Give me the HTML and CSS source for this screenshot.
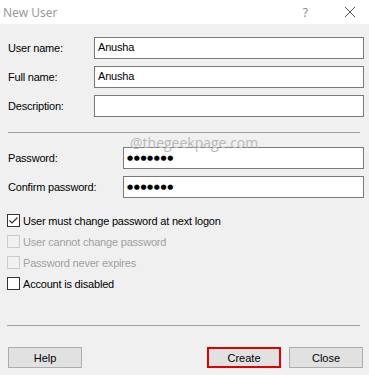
FILE: index.html
```html
<!DOCTYPE html>
<html lang="en">
<head>
    <meta charset="UTF-8">
    <title>New User</title>
    <link rel="stylesheet" href="styles.css">
</head>
<body>
    <div class="dialog">
        <div class="titlebar">
            <span class="title">New User</span>
            <span class="help-btn">?</span>
            <svg class="close-x" width="12" height="12" viewBox="0 0 12 12">
                <path d="M1 1 L11 11 M11 1 L1 11" stroke="#555" stroke-width="1" fill="none"/>
            </svg>
        </div>

        <div class="content">
            <div class="fields">
                <div class="row">
                    <label>User name:</label>
                    <div class="field">Anusha</div>
                </div>
                <div class="row">
                    <label>Full name:</label>
                    <div class="field">Anusha</div>
                </div>
                <div class="row">
                    <label>Description:</label>
                    <div class="field"></div>
                </div>
            </div>

            <div class="separator sep-top"></div>
            <div class="watermark">@thegeekpage.com</div>

            <div class="fields pw-fields">
                <div class="row">
                    <label class="wide">Password:</label>
                    <div class="field dots">●●●●●●●</div>
                </div>
                <div class="row">
                    <label class="wide">Confirm password:</label>
                    <div class="field dots">●●●●●●●</div>
                </div>
            </div>

            <div class="checks">
                <div class="check">
                    <span class="box">
                        <svg width="11" height="11" viewBox="0 0 11 11">
                            <path d="M1.5 5.5 L4 8 L9.5 2.5" stroke="#333" stroke-width="1.2" fill="none"/>
                        </svg>
                    </span>
                    <span>User must change password at next logon</span>
                </div>
                <div class="check disabled">
                    <span class="box"></span>
                    <span>User cannot change password</span>
                </div>
                <div class="check disabled">
                    <span class="box"></span>
                    <span>Password never expires</span>
                </div>
                <div class="check">
                    <span class="box"></span>
                    <span>Account is disabled</span>
                </div>
            </div>

            <div class="separator sep-bottom"></div>

            <div class="buttons">
                <button class="btn">Help</button>
                <div class="right-buttons">
                    <button class="btn btn-default">Create</button>
                    <button class="btn">Close</button>
                </div>
            </div>
        </div>
    </div>
</body>
</html>
```

FILE: styles.css
```css
html, body {
    margin: 0;
    padding: 0;
}
body {
    width: 369px;
    height: 375px;
    background-color: #f0f0f0;
    font-family: "Liberation Sans", Arial, sans-serif;
    font-size: 11px;
    letter-spacing: -0.2px;
    color: #000;
    overflow: hidden;
}
.dialog {
    position: relative;
    height: 375px;
}
.titlebar {
    height: 24px;
    background-color: #fff;
    display: flex;
    align-items: center;
    font-family: "Noto Sans", "Open Sans", sans-serif;
    letter-spacing: 0;
}
.title {
    margin-left: 3px;
    font-size: 12px;
    color: #999;
    flex: 1;
}
.help-btn {
    font-size: 12px;
    color: #888;
    margin-right: 36px;
}
.close-x {
    margin-right: 13px;
}
.content {
    padding: 13px 5px 0 8px;
}
.fields {
    display: flex;
    flex-direction: column;
    gap: 7px;
}
.row {
    display: flex;
    align-items: center;
    height: 22px;
}
.row label {
    width: 86px;
}
.row label.wide {
    width: 115px;
}
.field {
    flex: 1;
    height: 20px;
    border: 1px solid #7a7a7a;
    background-color: #fff;
    padding-left: 3px;
    line-height: 19px;
}
.dots {
    font-family: "DejaVu Sans", sans-serif;
    font-size: 7px;
    letter-spacing: 0.6px;
    line-height: 20px;
}
.separator {
    height: 1px;
    background-color: #a0a0a0;
    margin-right: 4px;
}
.sep-top {
    margin-top: 15px;
}
.watermark {
    position: absolute;
    left: 130px;
    top: 133px;
    font-family: "Open Sans", "Noto Sans", sans-serif;
    font-size: 14px;
    letter-spacing: 0;
    color: #b8b8b8;
}
.pw-fields {
    margin-top: 14px;
}
.checks {
    margin-top: 12px;
    margin-left: -1px;
    display: flex;
    flex-direction: column;
}
.check {
    display: flex;
    align-items: center;
    height: 21px;
    gap: 3px;
}
.box {
    width: 11px;
    height: 11px;
    border: 1px solid #333;
    background-color: #fff;
    display: flex;
    align-items: center;
    justify-content: center;
}
.check.disabled {
    color: #a0a0a0;
}
.check.disabled .box {
    border-color: #ccc;
    background-color: #f0f0f0;
}
.sep-bottom {
    margin-top: 31px;
    margin-left: -1px;
}
.buttons {
    margin-top: 21px;
    display: flex;
    justify-content: space-between;
    padding-right: 1px;
}
.right-buttons {
    display: flex;
    gap: 8px;
}
.btn {
    width: 74px;
    height: 21px;
    background-color: #e1e1e1;
    border: 1px solid #adadad;
    font-family: "Liberation Sans", Arial, sans-serif;
    font-size: 11px;
    color: #000;
    padding: 0;
}
.btn-default {
    border: 2px solid #e00000;
}
```
